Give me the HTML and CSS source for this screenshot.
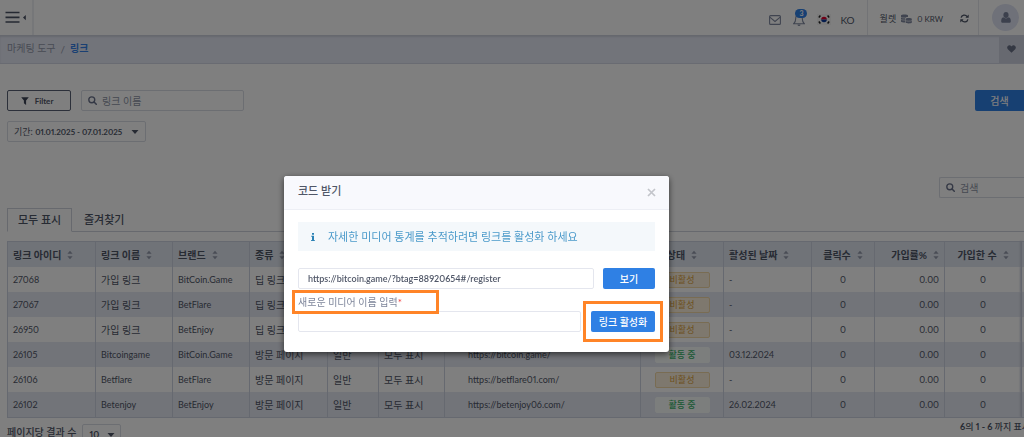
FILE: index.html
```
<!DOCTYPE html>
<html lang="ko">
<head>
<meta charset="utf-8">
<title>링크</title>
<link rel="stylesheet" href="styles.css">
</head>
<body>
<svg class="sprite" aria-hidden="true">
  <symbol id="search" viewBox="0 0 10 10"><circle cx="4.2" cy="4.2" r="3.300" fill="none" stroke="currentColor" stroke-width="1.5"/><path d="M6.700 6.700 9.2 9.2" stroke="currentColor" stroke-width="1.7" stroke-linecap="round"/></symbol>
  <symbol id="sort" viewBox="0 0 6 10"><path d="M0.4 3.8 3 .8 5.6 3.8zM.4 6.2 3 9.2 5.6 6.2z" fill="currentColor"/></symbol>
  <symbol id="caret" viewBox="0 0 8 4"><path d="M.5 0h7L4 4z" fill="currentColor"/></symbol>
</svg>

<header class="topbar">
  <button class="menu" aria-label="메뉴">
    <svg width="22" height="13" viewBox="0 0 22 13"><path d="M.5 1.5h14M.5 6.3h14M.5 11h14" stroke="#4a5264" stroke-width="1.7"/><path d="M20.800 4v5.200L18 6.600z" fill="#4a5264"/></svg>
  </button>
  <div class="tools">
    <button class="tool" aria-label="메시지">
      <svg width="12" height="10" viewBox="0 0 12 10" fill="none" stroke="#8089a0" stroke-width="1.100"><rect x=".6" y=".6" width="10.800" height="8.800" rx="1"/><path d="M.8 2.200 6 6.500l5.200-4.300"/></svg>
    </button>
    <button class="tool bell" aria-label="알림">
      <svg width="12" height="14" viewBox="0 0 12 14"><path d="M6 1.500C3.600 1.700 2.700 3.500 2.700 5.600c0 2.500-.6 4-2 5.100h10.600c-1.400-1.100-2-2.600-2-5.100 0-2.100-.9-3.900-3.300-4.100z" fill="none" stroke="#8089a0" stroke-width="1.100"/><path d="M4.500 11.600h3a1.500 1.500 0 0 1-3 0z" fill="#8089a0"/></svg>
      <span class="count">3</span>
    </button>
    <button class="lang">
      <svg width="14" height="11" viewBox="0 0 14 11"><path fill="#f5f5f5" d="M0 0h14v11H0z"/><path d="M4.200 5.500a2.800 2.800 0 0 1 5.600 0z" fill="#e0002c"/><path d="M4.200 5.500a2.800 2.800 0 0 0 5.600 0z" fill="#0a3a9c"/><path d="M1.800 3.500 3.400 1.500M10.600 1.500l1.600 2M1.800 7.500l1.600 2M10.600 9.500l1.600-2" stroke="#222" stroke-width="1.500"/></svg>
      <span>KO</span>
    </button>
  </div>
  <div class="wallet">
    <span>월렛</span>
    <svg width="11" height="10" viewBox="0 0 11 10" fill="#8089a0"><path d="M0 1.500C0 .3 7 .3 7 1.500V3C5 3 4 3.600 4 4.600V8.500C2 8.500 0 8.200 0 7.400z"/><path d="M4.600 4.800c0-1 6.200-1 6.200 0v3.800c0 1.200-6.200 1.200-6.200 0z"/><path d="M0 3.200c.5.700 3 .8 4.300.7M0 5.300c.5.700 2.500.8 4 .8M4.600 6.500c.8.900 5.400.9 6.200 0" fill="none" stroke="#fff" stroke-width=".6"/></svg>
    <span class="amount">0 KRW</span>
    <button class="refresh" aria-label="새로 고침">
      <svg width="9" height="9" viewBox="0 0 9 9"><path d="M1.100 3.700A3.300 3.300 0 0 1 7.100 2.600M7.900 5.300A3.300 3.300 0 0 1 1.900 6.400" fill="none" stroke="#4a5264" stroke-width="1.300"/><path d="M8.700.4v3.300H5.400zM.3 8.600V5.300h3.300z" fill="#4a5264"/></svg>
    </button>
  </div>
  <button class="avatar" aria-label="계정">
    <svg width="10" height="11" viewBox="0 0 10 11" fill="#78809a"><ellipse cx="5" cy="3" rx="2.600" ry="3"/><path d="M2.300 5.300c1.500 1.500 3.900 1.500 5.400 0C9.200 5.600 9.800 7 9.800 9.200c0 1-.7 1.600-1.500 1.600H1.700C.9 10.800.2 10.200.2 9.200.2 7 .8 5.600 2.300 5.300z"/></svg>
  </button>
</header>

<nav class="crumbs">
  <a href="#">마케팅 도구</a><span>/</span><a href="#" class="current">링크</a>
  <button class="favorite" aria-label="즐겨찾기 추가">
    <svg width="9" height="8" viewBox="0 0 9 8"><path d="M4.500 7.800.8 4.200C-.8 2.200.8.200 2.400.2c1 0 1.700.6 2.100 1.300C4.900.8 5.600.2 6.600.2c1.600 0 3.200 2 1.600 4z" fill="#697187"/></svg>
  </button>
</nav>

<main class="content">
  <div class="filters">
    <button class="filter-btn"><svg width="8" height="8" viewBox="0 0 8 8"><path d="M.2.2h7.600L5.100 3.500V7.900L2.900 6.300V3.500z" fill="#3d4456"/></svg>Filter</button>
    <label class="search wide"><svg width="9" height="9"><use href="#search"/></svg><input type="text" placeholder="링크 이름" aria-label="링크 이름"></label>
    <button class="primary submit">검색</button>
  </div>
  <button class="period"><span>기간: <b>01.01.2025 - 07.01.2025</b></span><svg width="8" height="4"><use href="#caret"/></svg></button>
  <label class="search table-search"><svg width="9" height="9"><use href="#search"/></svg><input type="text" placeholder="검색" aria-label="검색"></label>

  <div class="tabs" role="tablist">
    <button class="tab active" role="tab" aria-selected="true">모두 표시</button>
    <button class="tab" role="tab" aria-selected="false">즐겨찾기</button>
  </div>

  <table class="grid">
    <colgroup><col class="w88"><col class="w77"><col class="w77"><col class="w78"><col class="w51"><col class="w66"><col class="w196"><col class="w83"><col class="w88"><col class="w63"><col class="w70"><col class="w77"><col></colgroup>
    <thead>
      <tr>
        <th>링크 아이디<svg><use href="#sort"/></svg></th>
        <th>링크 이름<svg><use href="#sort"/></svg></th>
        <th>브랜드<svg><use href="#sort"/></svg></th>
        <th>종류<svg><use href="#sort"/></svg></th>
        <th></th><th></th><th></th>
        <th class="mid">상태<svg><use href="#sort"/></svg></th>
        <th>활성된 날짜<svg><use href="#sort"/></svg></th>
        <th class="mid">클릭수<svg><use href="#sort"/></svg></th>
        <th class="end">가입률%<svg><use href="#sort"/></svg></th>
        <th class="mid">가입한 수<svg><use href="#sort"/></svg></th>
        <th class="pinned"></th>
      </tr>
    </thead>
    <tbody>
      <tr><td>27068</td><td class="ko">가입 링크</td><td>BitCoin.Game</td><td class="ko">딥 링크</td><td></td><td></td><td></td><td class="mid"><span class="badge off">비활성</span></td><td>-</td><td class="mid">0</td><td class="end">0.00</td><td class="mid">0</td><td class="pinned"></td></tr>
      <tr><td>27067</td><td class="ko">가입 링크</td><td>BetFlare</td><td class="ko">딥 링크</td><td></td><td></td><td></td><td class="mid"><span class="badge off">비활성</span></td><td>-</td><td class="mid">0</td><td class="end">0.00</td><td class="mid">0</td><td class="pinned"></td></tr>
      <tr><td>26950</td><td class="ko">가입 링크</td><td>BetEnjoy</td><td class="ko">딥 링크</td><td></td><td></td><td></td><td class="mid"><span class="badge off">비활성</span></td><td>-</td><td class="mid">0</td><td class="end">0.00</td><td class="mid">0</td><td class="pinned"></td></tr>
      <tr><td>26105</td><td>Bitcoingame</td><td>BitCoin.Game</td><td class="ko">방문 페이지</td><td class="ko">일반</td><td class="ko">모두 표시</td><td class="url">https://bitcoin.game/</td><td class="mid"><span class="badge on">활동 중</span></td><td>03.12.2024</td><td class="mid">0</td><td class="end">0.00</td><td class="mid">0</td><td class="pinned"></td></tr>
      <tr><td>26106</td><td>Betflare</td><td>BetFlare</td><td class="ko">방문 페이지</td><td class="ko">일반</td><td class="ko">모두 표시</td><td class="url">https://betflare01.com/</td><td class="mid"><span class="badge off">비활성</span></td><td>-</td><td class="mid">0</td><td class="end">0.00</td><td class="mid">0</td><td class="pinned"></td></tr>
      <tr><td>26102</td><td>Betenjoy</td><td>BetEnjoy</td><td class="ko">방문 페이지</td><td class="ko">일반</td><td class="ko">모두 표시</td><td class="url">https://betenjoy06.com/</td><td class="mid"><span class="badge on">활동 중</span></td><td>26.02.2024</td><td class="mid">0</td><td class="end">0.00</td><td class="mid">0</td><td class="pinned"></td></tr>
    </tbody>
  </table>

  <footer class="pager">
    <label for="size">페이지당 결과 수</label>
    <span class="size"><select id="size"><option>10</option></select><svg width="8" height="4"><use href="#caret"/></svg></span>
    <span class="range"><b>6</b>의 <b>1 - 6</b> 까지 표시</span>
  </footer>
</main>

<div class="backdrop">
  <section class="modal" role="dialog" aria-modal="true" aria-labelledby="title">
    <header class="modal-head">
      <h2 id="title">코드 받기</h2>
      <button class="close" aria-label="닫기"><svg width="9" height="9" viewBox="0 0 9 9"><path d="M1 1l7 7M8 1 1 8" stroke="#c3c5cb" stroke-width="1.700"/></svg></button>
    </header>
    <div class="modal-body">
      <p class="info"><svg width="4" height="8" viewBox="0 0 4 8"><path d="M1 0h2v1.800H1zM.2 2.700H3v4.200h.8V8H.1V6.900H1V3.800H.2z" fill="#2c82b5"/></svg>자세한 미디어 통계를 추적하려면 링크를 활성화 하세요</p>
      <div class="row">
        <input type="text" value="https://bitcoin.game/?btag=88920654#/register" aria-label="링크">
        <button class="primary view">보기</button>
      </div>
      <label class="field-label" for="media">새로운 미디어 이름 입력<em>*</em></label>
      <div class="row">
        <input type="text" id="media">
        <div class="activate"><button class="primary">링크 활성화</button></div>
      </div>
    </div>
  </section>
</div>
</body>
</html>
```
FILE: styles.css
```
*, *::before { box-sizing: border-box; }
body {
  margin: 0;
  height: 100vh;
  overflow: hidden;
  background: #fff;
  color: #4f5667;
  font: 10px/14px Lato, "Noto Sans CJK KR", sans-serif;
  font-variant-numeric: proportional-nums;
}
button, input, select { font: inherit; font-variant-numeric: inherit; color: inherit; margin: 0; }
button { display: flex; align-items: center; justify-content: center; padding: 0; border: 0; background: none; white-space: nowrap; }
svg { flex: none; }
a { color: inherit; text-decoration: none; }
.sprite { position: absolute; width: 0; height: 0; }

.topbar { display: flex; height: 35px; }
.menu { width: 34px; border-right: 2px solid #eceef3; }
.tools { display: flex; align-items: center; gap: 12px; margin-left: auto; padding: 4px 12px 0 0; border-right: 1px solid #e4e6ec; }
.bell { position: relative; }
.count {
  position: absolute; left: 2px; top: -4px;
  width: 12px; height: 9px; border-radius: 5px;
  background: #2f80e7; color: #fff; font-size: 7px; line-height: 9px; font-weight: 700;
}
.lang { gap: 9px; font-size: 10px; }
.wallet { display: flex; align-items: center; gap: 5px; padding: 2px 9px 0 12px; border-right: 1px solid #e4e6ec; font-size: 9px; }
.amount { font-size: 8px; }
.refresh { margin-left: 12px; }
.avatar { width: 27px; height: 27px; margin: 4px 5px 0 13px; border-radius: 50%; background: #dfe3f2; }

.crumbs {
  display: flex; align-items: center; gap: 5px; height: 29px; padding-left: 7px;
  background: #e5e8f5; border-bottom: 1px solid #d3d7e4; box-shadow: inset 0 2px 2px #ccd0dc;
  color: #9298a9;
}
.crumbs a { line-height: 24px; padding-bottom: 2px; }
.current { color: #3480e6; font-weight: 700; }
.favorite { width: 25px; align-self: stretch; margin-left: auto; background: #cfd3e1; }

.content { display: flex; flex-direction: column; align-items: stretch; padding: 26px 0 0 7px; }
.filters { display: flex; gap: 10px; }
.filter-btn { gap: 6px; width: 64px; height: 21px; border: 1px solid #596074; border-radius: 2px; font-size: 8px; font-weight: 700; padding-right: 4px; }
.search { display: flex; align-items: center; gap: 5px; height: 21px; padding-left: 6px; border: 1px solid #d9dce5; border-radius: 2px; color: #69718a; }
.search input { min-width: 0; flex: 1; border: 0; padding: 0; background: none; }
.search input::placeholder { color: #8e94a5; opacity: 1; }
.wide { width: 163px; }
.primary { height: 21px; border-radius: 2px; background: #2f80e4; color: #fff; font-weight: 500; }
.submit { width: 49px; margin-left: auto; border-radius: 2px 0 0 2px; }
.period { align-self: flex-start; gap: 9px; height: 21px; margin-top: 10px; padding: 0 6px; border: 1px solid #d9dce5; border-radius: 2px; font-size: 9px; }
.period b { font-size: 8px; font-weight: 700; }
.table-search { align-self: flex-end; width: 85px; margin-top: 35px; border-right: 0; border-radius: 2px 0 0 2px; }

.tabs { display: flex; margin-top: 10px; height: 24px; border-bottom: 1px solid #cfd3dd; font-size: 11px; font-weight: 500; }
.tab { height: 24px; padding: 0 12px; }
.active { width: 65px; border: 1px solid #cfd3dd; border-bottom-color: #fff; }

.grid { width: 100%; margin-top: 9px; table-layout: fixed; border-collapse: separate; border-spacing: 0; border-left: 1px solid #cdd3e1; border-bottom: 1px solid #cdd3e1; font-size: 9px; }
.w88 { width: 88px; } .w77 { width: 77px; } .w78 { width: 78px; } .w51 { width: 51px; } .w66 { width: 66px; }
.w196 { width: 196px; } .w83 { width: 83px; } .w63 { width: 63px; } .w70 { width: 70px; }
.grid th { height: 26px; padding: 0 5px; text-align: left; font-size: 10px; font-weight: 700; white-space: nowrap; background: #e1e7f1; border-right: 1px solid #cdd3e1; border-top: 1px solid #cdd3e1; }
.grid th svg { width: 6px; height: 10px; margin-left: 6px; vertical-align: -1px; color: #9299aa; }
.grid td { height: 25px; padding: 0 5px; white-space: nowrap; border-right: 1px solid #cdd3e1; }
.grid .ko { font-size: 10px; }
.grid tbody tr:nth-child(even) { background: #e5e8f2; }
.grid .mid { text-align: center; }
.grid .end { text-align: right; }
.grid .url { padding-left: 23px; }
.grid .pinned { padding: 0; border-right: 0; box-shadow: -2px 0 2px #c3c8d6; }
.badge { display: inline-block; width: 55px; height: 16px; line-height: 14px; border: 1px solid; border-radius: 2px; }
.off { background: #fdf1dc; border-color: #f3d9a6; color: #dba13d; }
.on { background: #f8fcfa; border-color: #f8fcfa; color: #39b36b; font-weight: 500; }

.pager { display: flex; align-items: flex-start; gap: 6px; margin-top: 2px; font-weight: 500; }
.pager label { margin-top: 5px; }
.size { position: relative; width: 39px; height: 21px; margin-top: 4px; }
.size select { width: 100%; height: 100%; padding: 0 6px; border: 1px solid #d9dce5; border-radius: 2px; background: #fff; font-size: 9px; font-weight: 700; appearance: none; }
.size svg { position: absolute; right: 6px; top: 9px; }
.range { width: 64px; margin-left: auto; white-space: nowrap; font-size: 9px; line-height: 13px; }

.backdrop { position: fixed; inset: 0; padding: 176px 0 0 284px; background: rgba(0, 0, 0, .5); }
.modal { width: 385px; background: #fff; border-radius: 3px; box-shadow: 0 2px 6px rgba(0, 0, 0, .6); color: #4f5667; }
.modal-head { display: flex; align-items: center; justify-content: space-between; height: 34px; padding: 0 13px 4px 14px; background: #f8f9fd; border-bottom: 1px solid #edeff5; border-radius: 3px 3px 0 0; }
.modal-head h2 { margin: 0; font-size: 11px; font-weight: 500; }
.close { padding-top: 4px; }
.modal-body { padding: 12px 14px 20px; }
.info { display: flex; align-items: center; gap: 13px; height: 29px; margin: 0 0 17px; padding-left: 13px; background: #f4f8fb; color: #4b9aca; font-size: 11px; }
.row { display: flex; justify-content: space-between; }
.row input { flex: 1; min-width: 0; height: 21px; padding: 0 9px; border: 1px solid #e4e6ee; border-radius: 2px; font-size: 9px; font-weight: 600; }
.view { width: 52px; margin-left: 9px; }
.field-label { display: block; height: 22px; padding-top: 6px; color: #7e869b; position: relative; }
.field-label::before { content: ""; position: absolute; left: -6px; top: 1px; width: 147px; height: 24px; border: 3px solid #ff8427; z-index: 1; }
.field-label em { color: #f04040; font-style: normal; }
.activate { position: relative; margin-left: 10px; }
.activate .primary { width: 64px; }
.activate::before { content: ""; position: absolute; inset: -10px -8px; border: 3px solid #ff8427; }
```
